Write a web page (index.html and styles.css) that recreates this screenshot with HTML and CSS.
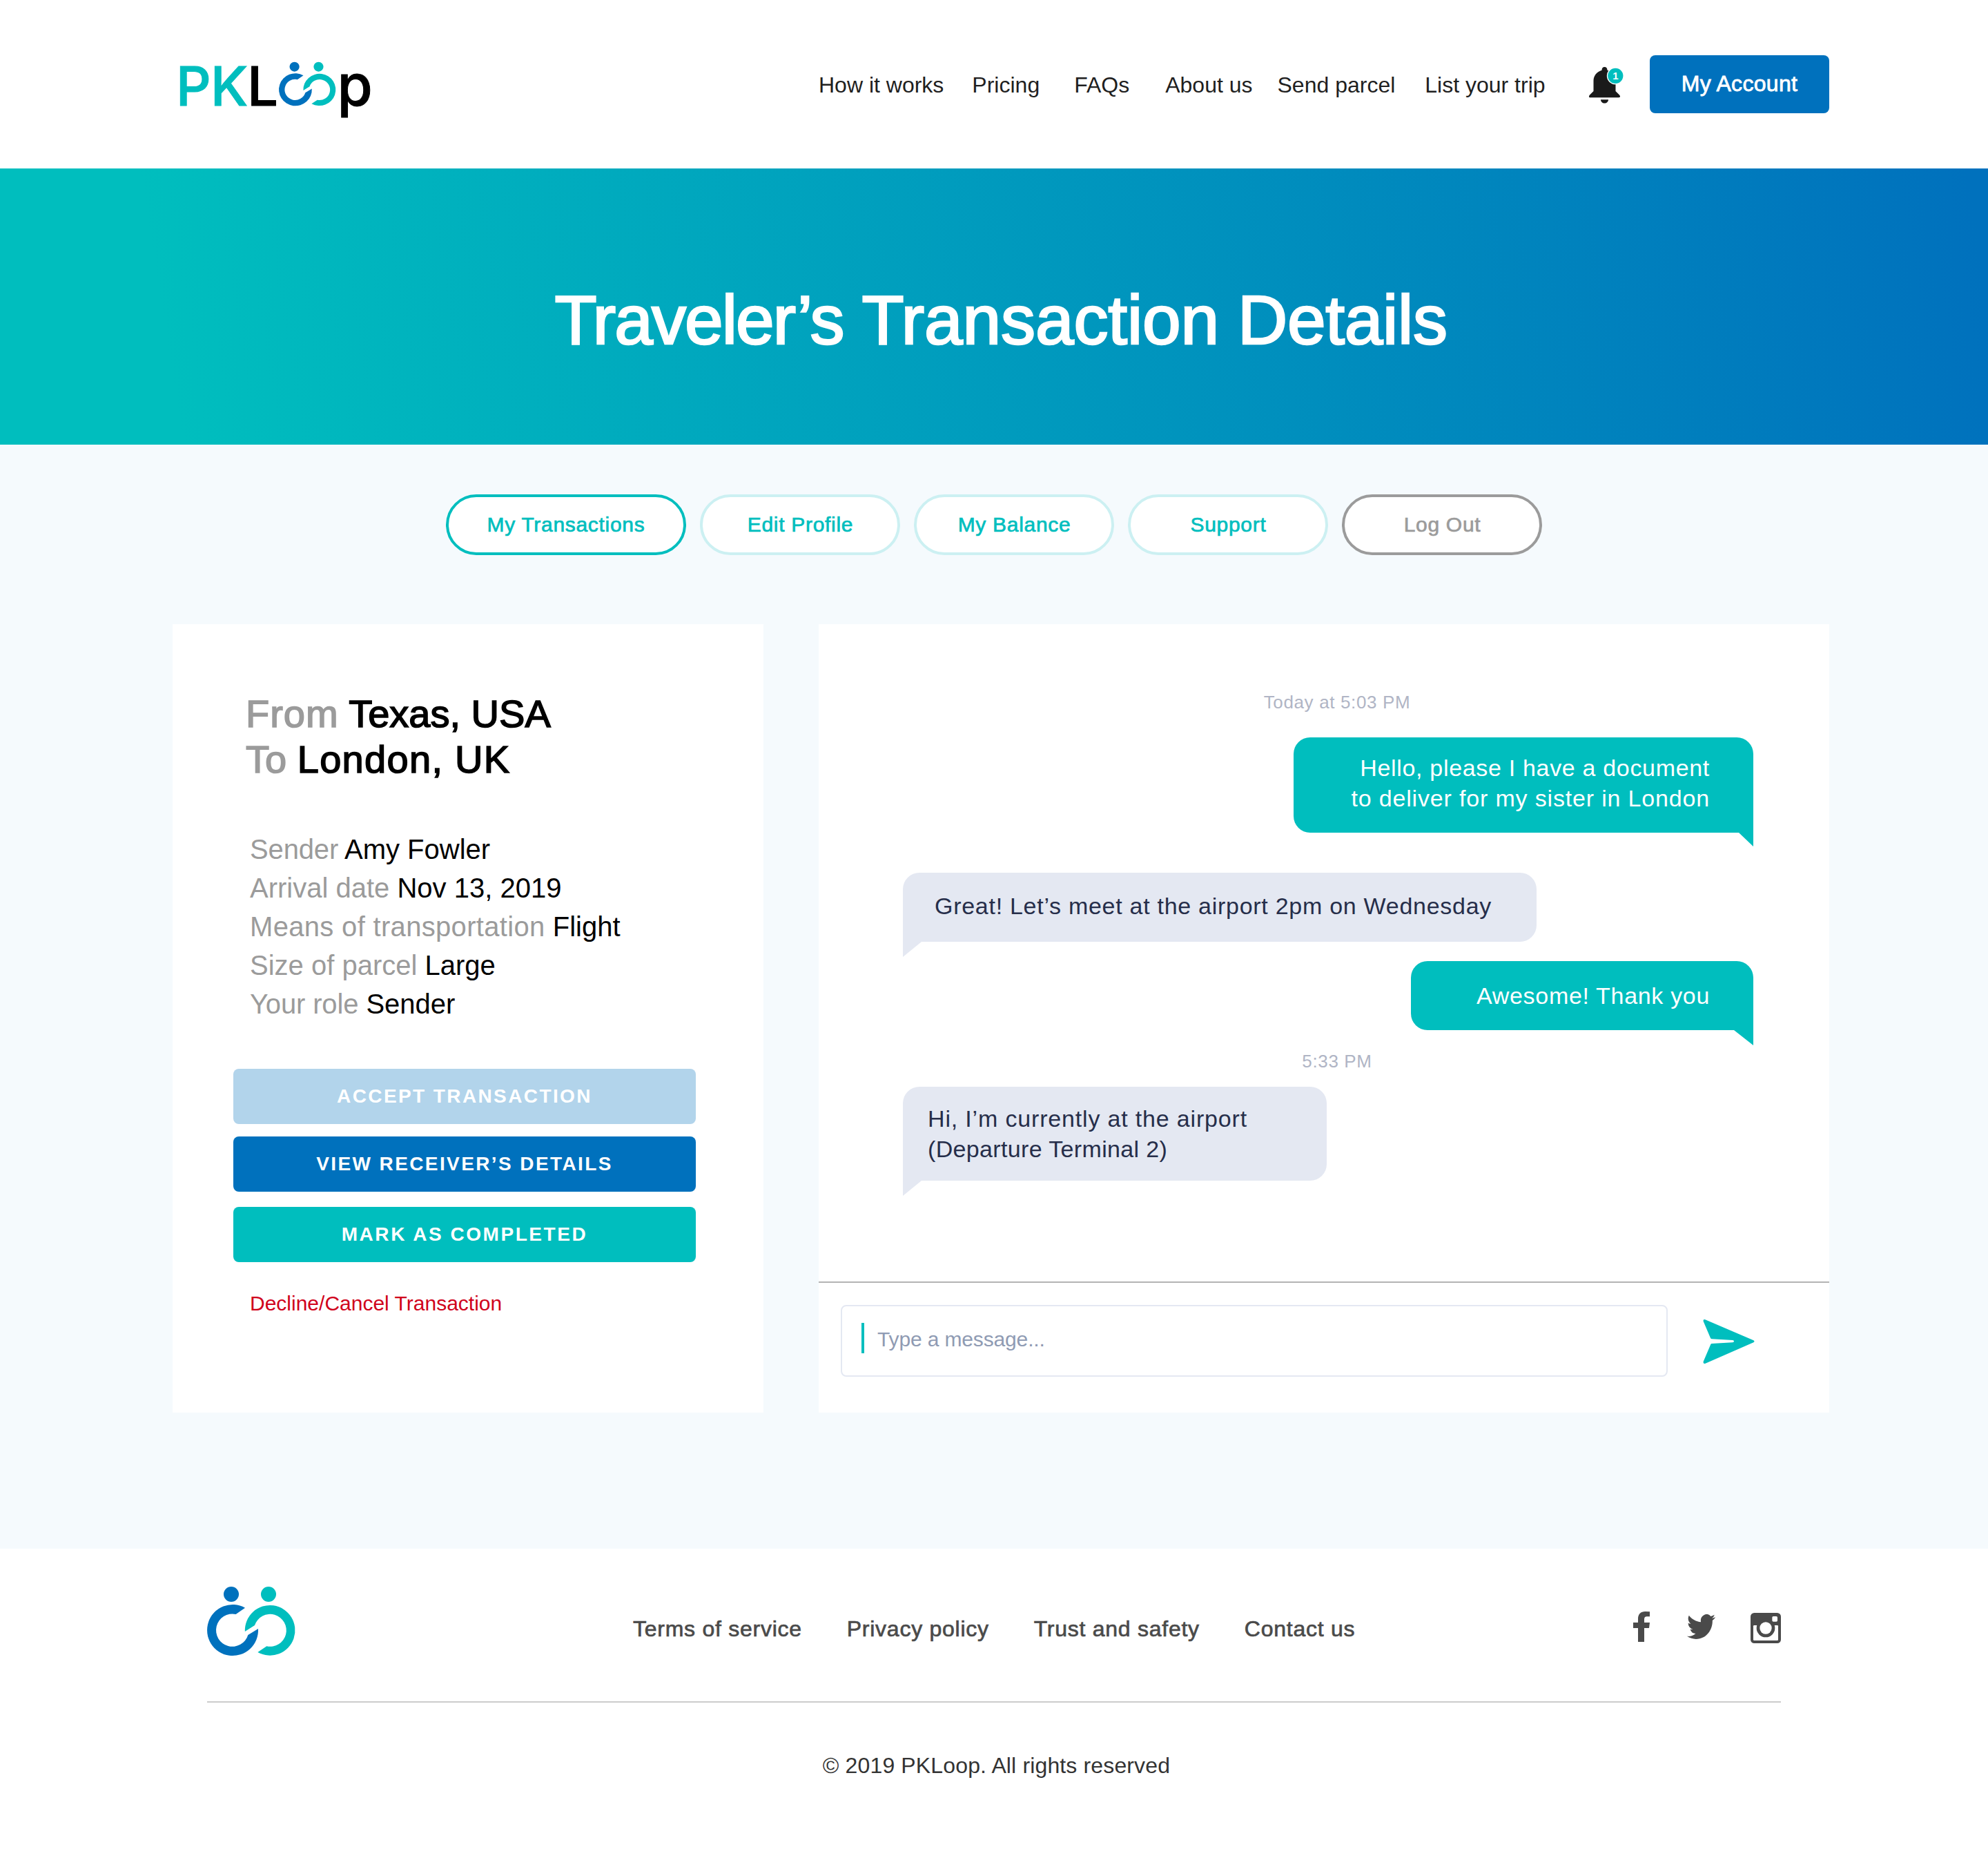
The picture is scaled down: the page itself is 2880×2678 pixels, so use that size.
FILE: index.html
```html
<!DOCTYPE html>
<html lang="en">
<head>
<meta charset="utf-8">
<title>PKLoop – Traveler’s Transaction Details</title>
<link rel="stylesheet" href="styles.css">
</head>
<body>
<svg class="defs" width="0" height="0" aria-hidden="true">
  <symbol id="rings" class="rings" viewBox="60 54 381 300" preserveAspectRatio="none">
    <circle cx="165" cy="87" r="33" fill="#0071bd"/>
    <path fill="#0071bd" d="M225 146A111 111 0 1 0 282 237L238 264A71 71 0 1 1 185 174Z"/>
    <circle cx="327" cy="87" r="33" fill="#00bebe"/>
    <path fill="#00bebe" d="M224.500 249A109 109 0 1 1 280 339L319 313A70.500 70.500 0 1 0 267 222Z"/>
  </symbol>
</svg>

<header class="header">
  <a class="logo" aria-label="PKLoop">
    <svg class="logo-mark" width="274" height="85" viewBox="60 54 822 255">
      <g class="logo-text">
        <text class="logo-teal" x="45" y="249" font-size="237">P</text>
        <text class="logo-teal" x="195" y="249" font-size="237">K</text>
        <text class="logo-black" x="355" y="249" font-size="237">L</text>
        <text class="logo-black" x="746" y="248" font-size="247">p</text>
      </g>
      <use href="#rings" x="492" y="59" width="246" height="191"/>
    </svg>
  </a>
  <nav class="nav">
    <a>How it works</a><a>Pricing</a><a>FAQs</a><a>About us</a><a>Send parcel</a><a>List your trip</a>
  </nav>
  <svg class="bell" width="52" height="54" viewBox="0 0 52 54">
    <path fill="#1a1a1a" d="M22.500 0C25 0 26.500 2 26.500 4.800C33.500 7 38.500 12.500 38.500 20V35L44 40.500C45.700 42.500 45.500 44.300 43 44.300H2C-.5 44.300-.5 42.500 1 40.500L6.500 35V20C6.500 12.500 11.500 7 18.500 4.800C18.500 2 20 0 22.500 0ZM17 47.300H28C28 50.500 25.500 52.600 22.500 52.600S17 50.500 17 47.300Z"/>
    <circle cx="38.300" cy="12.800" r="11.800" fill="#00bebe" stroke="#fff" stroke-width="1.400"/>
    <text class="bell-count" x="38.300" y="17.800">1</text>
  </svg>
  <a class="account">My Account</a>
</header>

<section class="hero"><h1><span class="w1">Traveler’s</span> <span class="w2">Transaction</span> <span class="w3">Details</span></h1></section>

<main class="main">
  <nav class="tabs">
    <a class="tab tab-active">My Transactions</a>
    <a class="tab">Edit Profile</a>
    <a class="tab">My Balance</a>
    <a class="tab">Support</a>
    <a class="tab tab-muted">Log Out</a>
  </nav>

  <div class="cards">
    <section class="card details">
      <h2 class="route">
        <div><span class="label route-from">From</span> Texas, USA</div>
        <div><span class="label">To</span> <span class="route-to">London, UK</span></div>
      </h2>
      <ul class="facts">
        <li><span class="label label-tight">Sender</span> Amy Fowler</li>
        <li><span class="label">Arrival date</span> Nov 13, 2019</li>
        <li><span class="label label-wide">Means of transportation</span> Flight</li>
        <li><span class="label">Size of parcel</span> Large</li>
        <li><span class="label label-tight">Your role</span> Sender</li>
      </ul>
      <div class="actions">
        <a class="btn btn-disabled">ACCEPT TRANSACTION</a>
        <a class="btn btn-blue">VIEW RECEIVER’S DETAILS</a>
        <a class="btn btn-teal">MARK AS COMPLETED</a>
      </div>
      <a class="decline">Decline/Cancel Transaction</a>
    </section>

    <section class="card chat">
      <div class="messages">
        <div class="time">Today at 5:03 PM</div>
        <div class="bubble mine m1">Hello, please I have a document<br><span class="wide">to deliver for my sister in London</span></div>
        <div class="bubble theirs m2">Great! Let’s meet at the airport 2pm on Wednesday</div>
        <div class="bubble mine m3">Awesome! Thank you</div>
        <div class="time time-later">5:33 PM</div>
        <div class="bubble theirs m4"><span class="wide">Hi, I’m currently at the airport</span><br><span class="narrow">(Departure Terminal 2)</span></div>
      </div>
      <div class="composer">
        <div class="field"><span class="caret"></span><span class="placeholder">Type a message...</span></div>
        <svg class="send" width="75" height="66" viewBox="80 60 225 198">
          <path fill="#00bebe" d="M90 64L300 154Q307 158 300 163L91 254Q80 257 82 246L114 171Q115 168 119 168L209 163Q215 162 215 158Q215 153 209 153L119 148Q115 148 113 144L82 71Q80 61 90 64Z"/>
        </svg>
      </div>
    </section>
  </div>
</main>

<footer class="footer">
  <div class="footer-row">
    <svg class="footer-mark" width="127" height="100"><use href="#rings" width="127" height="100"/></svg>
    <nav class="footer-links">
      <a>Terms of service</a><a>Privacy policy</a><a>Trust and safety</a><a>Contact us</a>
    </nav>
    <div class="social">
      <svg class="facebook" width="24" height="44" viewBox="78 72 72 132"><path fill="#4a4a4a" d="M99 204V144H78V120H99V104C99 84 111 72 130 72Q142 72 150 73V94H137Q126 94 126 106V120H150L147 144H126V204Z"/></svg>
      <svg class="twitter" width="41" height="36" viewBox="0 2.200 24 19.600" preserveAspectRatio="none"><path fill="#4a4a4a" d="M23.953 4.570a10 10 0 01-2.825.775 4.958 4.958 0 002.163-2.723c-.951.555-2.005.959-3.127 1.184a4.920 4.920 0 00-8.384 4.482C7.690 8.095 4.067 6.130 1.640 3.162a4.822 4.822 0 00-.666 2.475c0 1.710.870 3.213 2.188 4.096a4.904 4.904 0 01-2.228-.616v.060a4.923 4.923 0 003.946 4.827 4.996 4.996 0 01-2.212.085 4.936 4.936 0 004.604 3.417 9.867 9.867 0 01-6.102 2.105c-.390 0-.779-.023-1.170-.067a13.995 13.995 0 007.557 2.209c9.053 0 13.998-7.496 13.998-13.985 0-.210 0-.420-.015-.630A9.935 9.935 0 0024 4.590z"/></svg>
      <svg class="instagram" width="44" height="44" viewBox="0 0 132 132">
        <rect width="132" height="132" rx="16" fill="#4a4a4a"/>
        <rect x="12" y="54" width="108" height="66" rx="4" fill="#fff"/>
        <circle cx="66" cy="66" r="40" fill="#4a4a4a"/>
        <circle cx="66" cy="66" r="26" fill="#fff"/>
        <rect x="94" y="15" width="23" height="23" rx="5" fill="#fff"/>
      </svg>
    </div>
  </div>
  <p class="copyright">© 2019 PKLoop. All rights reserved</p>
</footer>
</body>
</html>
```
FILE: styles.css
```css
* { box-sizing: border-box; }
body {
  margin: 0;
  background: #fff;
  color: #000;
  font-family: "Liberation Sans", Arial, sans-serif;
  font-size: 32px;
  line-height: 40px;
}
h1, h2, p, ul { margin: 0; padding: 0; font-weight: normal; }
ul { list-style: none; }
svg { display: block; flex: none; }
.defs { position: absolute; }
.rings, .logo-mark, .footer-mark { overflow: visible; }

/* Header */
.header {
  display: flex;
  align-items: center;
  height: 244px;
  padding: 0 230px 0 260px;
}
.logo { flex: none; width: 274px; margin-top: 17px; }
.logo-text { font-family: Inter, sans-serif; font-weight: 500; stroke-width: 3px; }
.logo-teal { fill: #00bebe; stroke: #00bebe; }
.logo-black { fill: #000; stroke: #000; }
.nav {
  display: flex;
  margin-left: 652px;
  padding-top: 2px;
  color: #1f1f1f;
  white-space: nowrap;
}
.nav a:nth-child(2) { margin-left: 41px; }
.nav a:nth-child(3) { margin-left: 50px; }
.nav a:nth-child(4) { margin-left: 52px; }
.nav a:nth-child(5) { margin-left: 36px; }
.nav a:nth-child(6) { margin-left: 43px; }
.bell { margin: 4px 36px 0 auto; }
.bell-count {
  fill: #fff;
  font-size: 15px;
  font-weight: bold;
  text-anchor: middle;
}
.account {
  flex: none;
  width: 260px;
  height: 84px;
  padding-top: 21px;
  border-radius: 8px;
  background: #0071bd;
  color: #fff;
  letter-spacing: 0.3px;
  text-align: center;
  -webkit-text-stroke: 0.8px;
}

/* Title band */
.hero {
  height: 400px;
  padding: 159px 0 0 20px;
  background: linear-gradient(81deg, #00bebe 9%, #0071bd 99%);
  color: #fff;
  text-align: center;
}
.hero h1 {
  font-size: 100px;
  line-height: 120px;
  letter-spacing: -0.78px;
  -webkit-text-stroke: 2.600px;
}
.w1 { letter-spacing: -1.900px; }
.w2 { letter-spacing: -0.120px; }
.w3 { letter-spacing: -0.300px; }

/* Account tabs */
.main { height: 1599px; padding-top: 72px; background: #f5fafd; }
.tabs { display: flex; justify-content: center; gap: 20px; }
.tab {
  width: 290px;
  height: 88px;
  padding: 20px 0 0 1px;
  border: 4px solid #ccf0f2;
  border-radius: 44px;
  background: #fff;
  color: #00bebe;
  font-size: 30px;
  letter-spacing: 0.7px;
  text-align: center;
  -webkit-text-stroke: 0.7px;
}
.tab-active { width: 348px; padding-left: 0; border-color: #00bebe; }
.tab-muted { border-color: #9b9b9b; color: #9b9b9b; }

.cards {
  display: grid;
  grid-template-columns: 856px 1464px;
  gap: 80px;
  margin: 100px 0 0 250px;
}
.card { height: 1142px; background: #fff; }

/* Transaction details */
.details { padding: 97px 98px 0 88px; }
.label { color: #9b9b9b; }
.route {
  padding-left: 18px;
  font-size: 56px;
  line-height: 66px;
  -webkit-text-stroke: 1.600px;
}
.route-from { letter-spacing: 1px; }
.route-to { letter-spacing: 1.300px; }
.facts {
  margin-top: 69px;
  padding-left: 24px;
  font-size: 40px;
  line-height: 56px;
}
.label-wide { letter-spacing: 0.320px; }
.label-tight { letter-spacing: -0.150px; }
.actions { display: flex; flex-direction: column; margin-top: 66px; }
.btn {
  height: 80px;
  border-radius: 8px;
  color: #fff;
  font-size: 28px;
  font-weight: bold;
  line-height: 80px;
  letter-spacing: 2.400px;
  text-align: center;
}
.btn-disabled { background: #b2d4eb; }
.btn-blue { margin-top: 18px; background: #0071bd; }
.btn-teal { margin-top: 22px; background: #00bebe; letter-spacing: 2.550px; }
.decline {
  display: block;
  margin: 40px 0 0 24px;
  color: #d0021b;
  font-size: 30px;
}

/* Conversation */
.chat { display: flex; flex-direction: column; }
.messages {
  display: flex;
  flex-direction: column;
  height: 952px;
  padding: 97px 110px 0 122px;
}
.time {
  padding-left: 26px;
  color: #b0b5c5;
  font-size: 26px;
  line-height: 32px;
  letter-spacing: 0.650px;
  text-align: center;
}
.time-later { margin-top: 29px; }
.bubble {
  position: relative;
  font-size: 34px;
  line-height: 44px;
  letter-spacing: 0.680px;
  white-space: nowrap;
}
.wide { letter-spacing: 0.830px; }
.narrow { letter-spacing: 0.350px; }
.bubble::after { content: ""; position: absolute; top: 100%; }
.mine {
  align-self: flex-end;
  padding-right: 63px;
  border-radius: 24px 24px 0 24px;
  background: #00bebe;
  color: #fff;
  text-align: right;
}
.mine::after {
  right: 0;
  width: 28px;
  height: 22px;
  background: #00bebe;
  clip-path: polygon(0 0, 100% 0, 100% 100%);
}
.theirs {
  align-self: flex-start;
  border-radius: 24px 24px 24px 0;
  background: #e4e8f2;
  color: #262e4a;
}
.theirs::after {
  left: 0;
  width: 27px;
  height: 22px;
  background: #e4e8f2;
  clip-path: polygon(0 0, 100% 0, 0 100%);
}
.m1 { width: 666px; height: 138px; margin-top: 35px; padding-top: 22px; }
.m1::after { width: 21px; height: 20px; }
.m2 {
  width: 918px;
  height: 100px;
  margin-top: 58px;
  padding: 26px 0 0 46px;
  letter-spacing: 0.720px;
}
.m3 { width: 496px; height: 100px; margin-top: 28px; padding-top: 28px; }
.m4 { width: 614px; height: 136px; margin-top: 21px; padding: 24px 0 0 36px; }

.composer {
  display: flex;
  height: 190px;
  padding: 32px 0 0 32px;
  border-top: 2px solid #b3b3b3;
}
.field {
  display: flex;
  align-items: center;
  width: 1198px;
  height: 104px;
  padding: 0 0 8px 28px;
  border: 2px solid #e4e8f2;
  border-radius: 8px;
}
.caret { width: 4px; height: 44px; background: #00bebe; }
.placeholder {
  margin: 3px 0 0 19px;
  color: #8f9bb3;
  font-size: 30px;
  letter-spacing: -0.14px;
}
.send { margin: 20px 0 0 51px; }

/* Footer */
.footer { width: 2280px; margin: 0 auto; }
.footer-row {
  display: flex;
  height: 223px;
  padding-top: 55px;
  border-bottom: 2px solid #ccc;
}
.footer-links {
  display: flex;
  gap: 65px;
  margin: 41px 0 0 490px;
  color: #4a4a4a;
  letter-spacing: 0.740px;
  -webkit-text-stroke: 0.7px;
}
.social { display: flex; align-items: flex-start; margin: 36px 0 0 auto; }
.twitter { margin: 4px 51px 0 54px; }
.instagram { margin-top: 2px; }
.copyright {
  margin-top: 71px;
  padding-left: 7px;
  color: #333;
  letter-spacing: 0.140px;
  text-align: center;
}
```
